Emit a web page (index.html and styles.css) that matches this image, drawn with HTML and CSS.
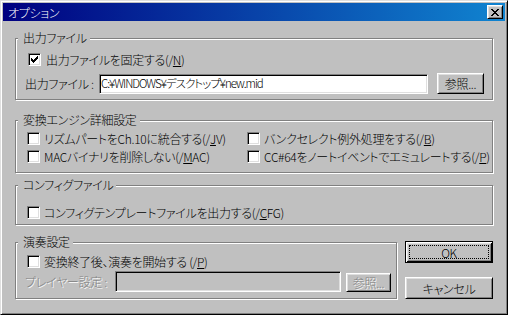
FILE: index.html
```html
<!DOCTYPE html>
<html lang="ja">
<head>
  <meta charset="UTF-8">
  <title>オプション</title>
  <link rel="stylesheet" href="styles.css">
</head>
<body>
  <div class="window">
    <div class="titlebar">
      <span class="title">オプション</span>
      <div class="close-btn">
        <svg width="8" height="7" viewBox="0 0 8 7"><path d="M0 0h2v1h-2zM6 0h2v1h-2zM1 1h2v1h-2zM5 1h2v1h-2zM2 2h4v1h-4zM3 3h2v1h-2zM2 4h4v1h-4zM1 5h2v1h-2zM5 5h2v1h-2zM0 6h2v1h-2zM6 6h2v1h-2z" fill="#000"/></svg>
      </div>
    </div>

    <div class="content">
      <!-- 出力ファイル -->
      <div class="group group-output">
        <span class="group-title">出力ファイル</span>
        <div class="check check-first">
          <span class="box"><svg width="7" height="7" viewBox="0 0 7 7"><path d="M6 0h1v1h-1zM5 1h2v1h-2zM0 2h1v1h-1zM4 2h3v1h-3zM0 3h2v1h-2zM3 3h3v1h-3zM0 4h5v1h-5zM1 5h3v1h-3zM2 6h1v1h-1z" fill="#000"/></svg></span>
          <span>出力ファイルを固定する(/<u>N</u>)</span>
        </div>
        <div class="file-row">
          <span class="field-label">出力ファイル :</span>
          <div class="textbox out-path"><span class="path">C:¥WINDOWS¥デスクトップ¥new.mid</span></div>
          <div class="btn btn-browse">参照...</div>
        </div>
      </div>

      <!-- 変換エンジン詳細設定 -->
      <div class="group group-engine">
        <span class="group-title">変換エンジン詳細設定</span>
        <div class="check-grid">
          <div class="check"><span class="box"></span><span>リズムパートをCh.10に統合する(/<u>J</u>V)</span></div>
          <div class="check"><span class="box"></span><span>バンクセレクト例外処理をする(/<u>B</u>)</span></div>
          <div class="check"><span class="box"></span><span>MACバイナリを削除しない(/<u>M</u>AC)</span></div>
          <div class="check"><span class="box"></span><span>CC#64をノートイベントでエミュレートする(/<u>P</u>)</span></div>
        </div>
      </div>

      <!-- コンフィグファイル -->
      <div class="group group-config">
        <span class="group-title">コンフィグファイル</span>
        <div class="check"><span class="box"></span><span>コンフィグテンプレートファイルを出力する(/<u>C</u>FG)</span></div>
      </div>

      <div class="bottom-row">
        <!-- 演奏設定 -->
        <div class="group group-play">
          <span class="group-title">演奏設定</span>
          <div class="check"><span class="box"></span><span>変換終了後、演奏を開始する (/<u>P</u>)</span></div>
          <div class="player-row">
            <span class="field-label player-label disabled">プレイヤー設定 :</span>
            <div class="textbox player-path off"></div>
            <div class="btn btn-player disabled">参照...</div>
          </div>
        </div>

        <div class="actions">
          <div class="btn btn-default"><span class="focus">OK</span></div>
          <div class="btn btn-action">キャンセル</div>
        </div>
      </div>
    </div>
  </div>
</body>
</html>
```

FILE: styles.css
```css
* {
  margin: 0;
  padding: 0;
  box-sizing: border-box;
}
body {
  background: #c0c0c0;
  font-family: "Noto Sans CJK JP", "Liberation Sans", sans-serif;
  font-size: 12px;
  font-weight: 300;
  font-feature-settings: "palt";
  letter-spacing: -0.3px;
  color: #000;
  line-height: 13px;
}
u {
  text-decoration: underline;
  text-underline-offset: 1px;
}

.window {
  width: 508px;
  height: 315px;
  padding: 2px;
  background: #c0c0c0;
  border: 1px solid;
  border-color: #dfdfdf #000 #000 #dfdfdf;
  box-shadow: inset 1px 1px #fff, inset -1px -1px #808080;
}
.titlebar {
  height: 18px;
  display: flex;
  align-items: center;
  justify-content: space-between;
  padding: 0 2px 0 5px;
  background: linear-gradient(to right, #000080, #1084d0);
  color: #fff;
}
.close-btn {
  width: 16px;
  height: 14px;
  display: flex;
  align-items: center;
  justify-content: center;
  background: #c0c0c0;
  border: 1px solid;
  border-color: #fff #000 #000 #fff;
  box-shadow: inset 1px 1px #dfdfdf, inset -1px -1px #808080;
}

.content {
  padding: 17px 0 0 12px;
}

/* 枠（エッチング線） */
.group {
  position: relative;
  width: 478px;
  border: 1px solid #808080;
  box-shadow: inset 1px 1px #fff, 1px 1px #fff;
  padding-left: 9px;
}
.group-title {
  position: absolute;
  top: -8px;
  left: 2px;
  padding: 0 3px 0 5px;
  background: #c0c0c0;
  white-space: nowrap;
}
.group-output {
  height: 62px;
  padding-top: 14px;
}
.group-engine {
  height: 53px;
  margin-top: 20px;
  padding-top: 11px;
  padding-left: 11px;
}
.group-config {
  height: 40px;
  margin-top: 12px;
  padding-top: 20px;
  padding-left: 11px;
}
.group-play {
  width: 382px;
  height: 57px;
  margin-top: 1px;
  padding-top: 12px;
}
.group-play > .check {
  margin-left: 2px;
}

/* チェックボックス */
.check {
  display: flex;
  align-items: center;
  height: 13px;
  white-space: nowrap;
}
.check-first {
  margin-left: 3px;
}
.check-first > span + span {
  margin-left: 1px;
}
.box {
  flex: none;
  width: 13px;
  height: 13px;
  margin-right: 4px;
  display: flex;
  align-items: center;
  justify-content: center;
  background: #fff;
  border: 1px solid;
  border-color: #808080 #fff #fff #808080;
  box-shadow: inset 1px 1px #000, inset -1px -1px #dfdfdf;
}
.check-grid {
  display: grid;
  grid-template-columns: 220px auto;
  grid-auto-rows: 13px;
  row-gap: 5px;
}

/* 入力欄とボタン */
.file-row,
.player-row {
  display: flex;
  align-items: center;
}
.file-row {
  margin-top: 7px;
}
.player-row {
  margin-top: 2px;
}
.field-label {
  flex: none;
  width: 74px;
  white-space: nowrap;
}
.player-label {
  width: 90px;
}
.textbox {
  height: 20px;
  padding: 0 1px;
  display: flex;
  align-items: center;
  background: #fff;
  white-space: nowrap;
  border: 1px solid;
  border-color: #808080 #fff #fff #808080;
  box-shadow: inset 1px 1px #000, inset -1px -1px #dfdfdf;
}
.path {
  font-size: 11.5px;
  letter-spacing: -1px;
}
.textbox.off {
  background: #c0c0c0;
}
.out-path {
  width: 329px;
}
.player-path {
  width: 226px;
  height: 21px;
}
.btn {
  display: flex;
  align-items: center;
  justify-content: center;
  background: #c0c0c0;
  white-space: nowrap;
  border: 1px solid;
  border-color: #fff #000 #000 #fff;
  box-shadow: inset 1px 1px #dfdfdf, inset -1px -1px #808080;
}
.btn-browse {
  width: 47px;
  height: 21px;
  margin-left: 9px;
}
.btn-player {
  width: 45px;
  height: 19px;
  margin-left: 5px;
  margin-top: 3px;
}
.disabled {
  color: #808080;
  text-shadow: 1px 1px 0 #fff;
}

/* OK / キャンセル */
.bottom-row {
  display: flex;
  align-items: flex-start;
  margin-top: 16px;
}
.actions {
  display: flex;
  flex-direction: column;
  gap: 14px;
  margin-left: 8px;
}
.actions .btn {
  width: 88px;
  height: 22px;
}
.btn-default {
  border: 1px solid #000;
  box-shadow: inset 1px 1px #fff, inset -1px -1px #000, inset 2px 2px #dfdfdf, inset -2px -2px #808080;
  padding: 3px;
}
.focus {
  flex: 1;
  align-self: stretch;
  display: flex;
  align-items: center;
  justify-content: center;
  border: 1px dotted #000;
}
```
